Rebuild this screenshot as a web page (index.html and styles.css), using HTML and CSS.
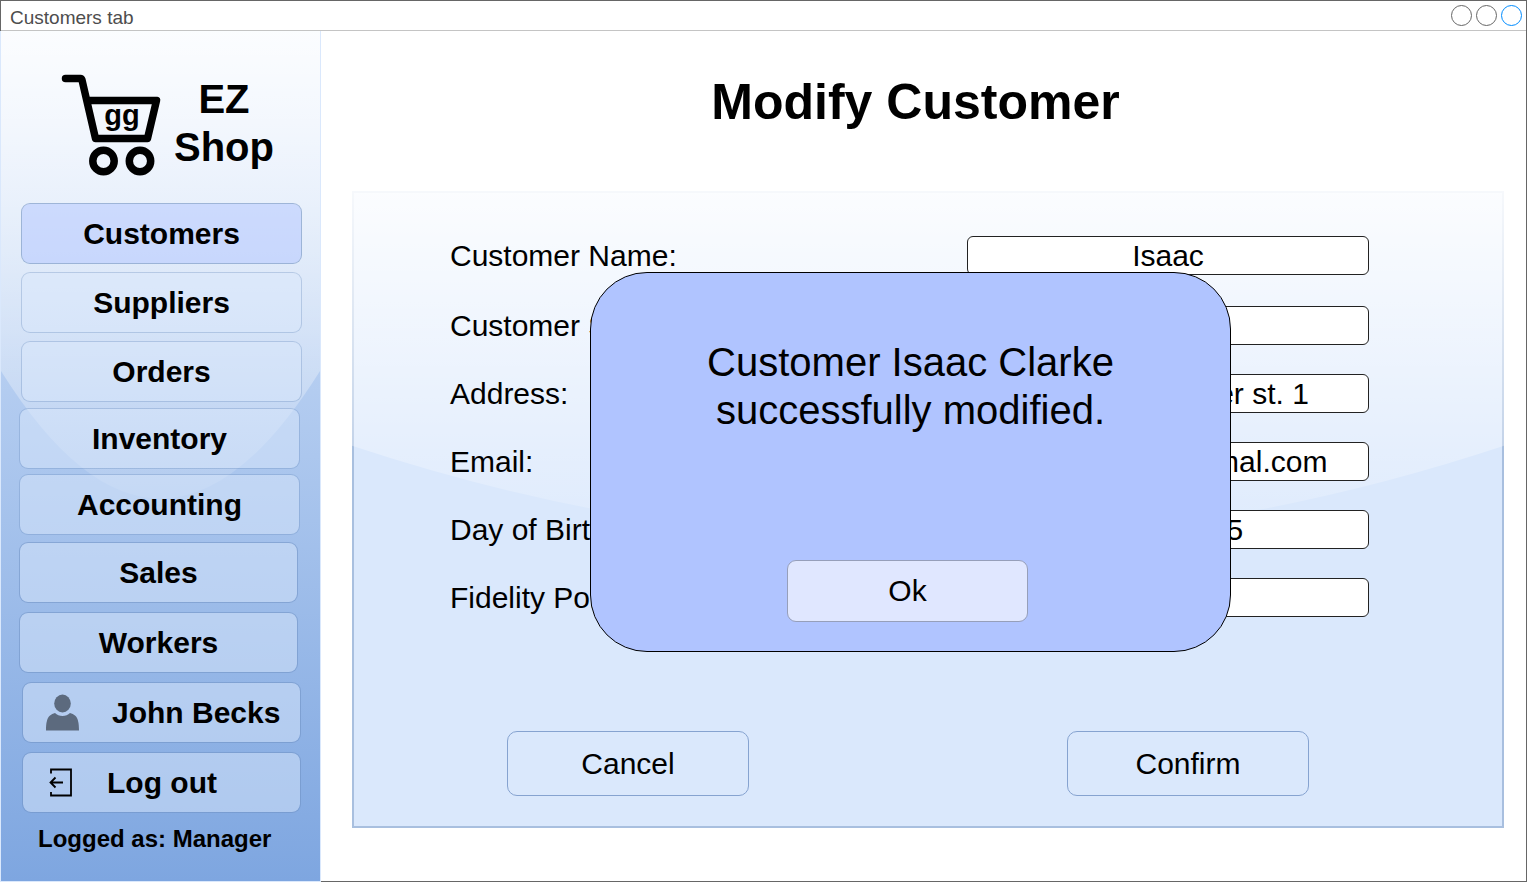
FILE: index.html
```html
<!DOCTYPE html>
<html lang="en">
<head>
<meta charset="utf-8">
<title>Customers tab</title>
<link rel="stylesheet" href="styles.css">
</head>
<body>
<div class="window">
  <header class="titlebar">
    <span class="titlebar-text">Customers tab</span>
    <div class="controls">
      <button class="control" type="button" aria-label="Minimize"></button>
      <button class="control" type="button" aria-label="Maximize"></button>
      <button class="control control-close" type="button" aria-label="Close"></button>
    </div>
  </header>
  <div class="body">
    <aside class="sidebar">
      <svg class="glass" viewBox="0 0 100 100" preserveAspectRatio="none" aria-hidden="true">
        <defs>
          <linearGradient id="shine" x1="0" y1="0" x2="0" y2="1">
            <stop offset="0" stop-color="#fff" stop-opacity="0.9"/>
            <stop offset="1" stop-color="#fff" stop-opacity="0.1"/>
          </linearGradient>
        </defs>
        <path d="M0 0V40Q50 70 100 40V0Z" fill="url(#shine)"/>
      </svg>
      <div class="brand">
        <svg class="cart" viewBox="60 74 102 104" role="img" aria-label="Shopping cart">
          <g fill="none" stroke="#000" stroke-width="7.500" stroke-linecap="round" stroke-linejoin="round">
            <path d="M65.500 78.500H80.500Q81.500 78.500 82 80L95.500 138.500H147.500L156.500 100.500H88"/>
            <circle cx="103.500" cy="161" r="10.700"/>
            <circle cx="140" cy="161" r="10.700"/>
          </g>
          <text class="cart-text" x="122" y="125" text-anchor="middle">gg</text>
        </svg>
        <span class="brand-name">EZ<br>Shop</span>
      </div>
      <nav class="nav">
        <div class="nav-group trade">
          <button class="nav-button current" type="button">Customers</button>
          <button class="nav-button" type="button">Suppliers</button>
          <button class="nav-button" type="button">Orders</button>
        </div>
        <div class="nav-group stock">
          <button class="nav-button" type="button">Inventory</button>
          <button class="nav-button" type="button">Accounting</button>
        </div>
        <div class="nav-group staff">
          <button class="nav-button" type="button">Sales</button>
          <button class="nav-button" type="button">Workers</button>
        </div>
        <div class="nav-group account">
          <button class="nav-button with-icon" type="button">
            <svg width="33" height="37" viewBox="0 0 33 37" aria-hidden="true">
              <ellipse cx="16.500" cy="9.500" rx="8.300" ry="9" fill="#5c6a7e"/>
              <path d="M0 36.500C0 29 1 24 4 21.500Q6 19.500 9 19Q12 22 16.500 22T24 19Q27 19.500 29 21.500C32 24 33 29 33 36.500Z" fill="#5c6a7e"/>
            </svg>
            <span>John Becks</span>
          </button>
          <button class="nav-button with-icon" type="button">
            <svg width="28" height="30" viewBox="0 0 28 30" fill="none" stroke="#000" stroke-width="1.800" aria-hidden="true">
              <path d="M5 5.500V1.500H25V27.500H5V24"/>
              <path d="M17 14.500H5M9.500 9.500L4.500 14.500L9.500 19.500"/>
            </svg>
            <span>Log out</span>
          </button>
        </div>
      </nav>
      <p class="role">Logged as: Manager</p>
    </aside>
    <main class="main">
      <h1 class="title">Modify Customer</h1>
      <section class="panel">
        <svg class="glass" viewBox="0 0 100 100" preserveAspectRatio="none" aria-hidden="true">
          <path d="M0 0V40Q50 70 100 40V0Z" fill="url(#shine)"/>
        </svg>
        <form class="form">
          <div class="field"><label for="name">Customer Name:</label><input id="name" type="text" value="Isaac"></div>
          <div class="field"><label for="surname">Customer Surname:</label><input id="surname" type="text" value="Clarke"></div>
          <div class="field"><label for="address">Address:</label><input id="address" type="text" value="Ishimura Garner st. 1"></div>
          <div class="field"><label for="email">Email:</label><input id="email" type="text" value="isaac.clarke@gmal.com"></div>
          <div class="field"><label for="birth">Day of Birth:</label><input id="birth" type="text" value="05/06/1965"></div>
          <div class="field"><label for="points">Fidelity Points:</label><input id="points" type="text" value="100"></div>
          <div class="actions">
            <button class="action" type="button">Cancel</button>
            <button class="action" type="button">Confirm</button>
          </div>
        </form>
        <div class="overlay">
          <div class="dialog" role="dialog" aria-labelledby="message">
            <p class="message" id="message">Customer Isaac Clarke successfully modified.</p>
            <div class="dialog-actions"><button class="ok" type="button">Ok</button></div>
          </div>
        </div>
      </section>
    </main>
  </div>
</div>
</body>
</html>
```
FILE: styles.css
```css
* {
  box-sizing: border-box;
}

body {
  margin: 0;
  background: #fff;
  color: #000;
  font-family: "Liberation Sans", Arial, sans-serif;
  font-size: 30px;
}

button,
input {
  margin: 0;
  padding: 0;
  color: inherit;
  font: inherit;
}

.window {
  display: flex;
  flex-direction: column;
  min-height: 100vh;
  border: 1px solid #666;
}

.titlebar {
  display: flex;
  align-items: center;
  justify-content: space-between;
  height: 30px;
  padding: 0 4px 0 9px;
  border-bottom: 1px solid #c4c4c4;
}

.titlebar-text {
  padding-top: 4px;
  color: #4d4d4d;
  font-size: 19px;
  line-height: 22px;
}

.controls {
  display: flex;
  gap: 4px;
}

.control {
  width: 21px;
  height: 21px;
  border: 1px solid #666;
  border-radius: 50%;
  background: #fff;
}

.control-close {
  border-color: #008cff;
}

.body {
  display: flex;
  flex: 1;
}

/* Sidebar */

.sidebar {
  position: relative;
  display: flex;
  flex: none;
  flex-direction: column;
  width: 321px;
  margin: 0 0 -1px -1px;
  border: 1px solid #dae8fc;
  border-top: 0;
  background: linear-gradient(#dae8fc, #7ea6e0);
}

.glass {
  position: absolute;
  inset: 0;
  width: 100%;
  height: 100%;
}

.brand,
.nav,
.role {
  position: relative;
}

.brand {
  display: flex;
  align-items: flex-start;
  gap: 12px;
  padding: 43px 0 25px 59px;
}

.cart {
  width: 102px;
  height: 104px;
}

.cart-text {
  font-size: 29px;
  font-weight: bold;
}

.brand-name {
  padding-top: 1px;
  font-size: 40px;
  font-weight: bold;
  line-height: 48px;
  text-align: center;
}

.nav-group {
  display: flex;
  flex-direction: column;
  gap: 9px;
}

.trade {
  gap: 8px;
  margin: 0 18px 6px 20px;
}

.stock {
  gap: 5px;
  margin: 0 20px 7px 18px;
}

.staff {
  margin: 0 22px 9px 18px;
}

.account {
  margin: 0 19px 12px 21px;
}

.nav-button {
  height: 61px;
  border: 1px solid rgba(108, 142, 191, 0.5);
  border-radius: 9px;
  background: rgba(218, 232, 252, 0.5);
  background-clip: padding-box;
  font-weight: bold;
  text-align: center;
}

.trade .nav-button,
.stock .nav-button {
  border-color: rgba(108, 142, 191, 0.35);
}

.trade .current {
  border-color: rgba(108, 142, 191, 0.6);
  background-color: rgba(176, 196, 255, 0.5);
}

.with-icon {
  display: flex;
  align-items: center;
  gap: 33px;
  padding-left: 23px;
}

.role {
  margin: 0;
  padding-left: 37px;
  font-size: 24px;
  font-weight: bold;
  line-height: 28px;
}

/* Main area */

.main {
  display: flex;
  flex: 1;
  flex-direction: column;
  padding: 41px 22px 53px 31px;
}

.title {
  margin: 0 0 59px;
  padding-right: 25px;
  font-size: 50px;
  line-height: 60px;
  text-align: center;
}

.panel {
  position: relative;
  flex: 1;
  background: #dae8fc;
}

.panel::before {
  content: "";
  position: absolute;
  inset: 0;
  border: 2px solid #a8bfdf;
}

.form {
  position: relative;
  padding: 45px 135px 32px 98px;
}

.field {
  display: grid;
  grid-template-columns: minmax(0, 1fr) 402px;
  align-items: center;
  margin-bottom: 29px;
}

.field:first-child {
  margin-bottom: 31px;
}

.field input {
  width: 100%;
  height: 39px;
  border: 1px solid #222;
  border-radius: 6px;
  background: #fff;
  text-align: center;
}

.actions {
  display: flex;
  justify-content: space-between;
  padding: 85px 60px 0 57px;
}

.action {
  width: 242px;
  height: 65px;
  border: 1px solid #86a3d0;
  border-radius: 10px;
  background: #dae8fc;
}

.overlay {
  position: absolute;
  inset: 0;
  display: flex;
  align-items: flex-start;
  justify-content: center;
  padding: 81px 35px 0 0;
}

.dialog {
  display: flex;
  flex-direction: column;
  justify-content: space-between;
  width: 641px;
  min-height: 380px;
  padding: 65px 100px 29px;
  border: 1px solid #000;
  border-radius: 57px;
  background: #b0c4ff;
}

.message {
  margin: 0;
  font-size: 40px;
  line-height: 48px;
  text-align: center;
}

.dialog-actions {
  display: flex;
  justify-content: center;
  padding-right: 6px;
}

.ok {
  width: 241px;
  height: 62px;
  border: 1px solid #969fba;
  border-radius: 9px;
  background: #e0e7ff;
}
```
